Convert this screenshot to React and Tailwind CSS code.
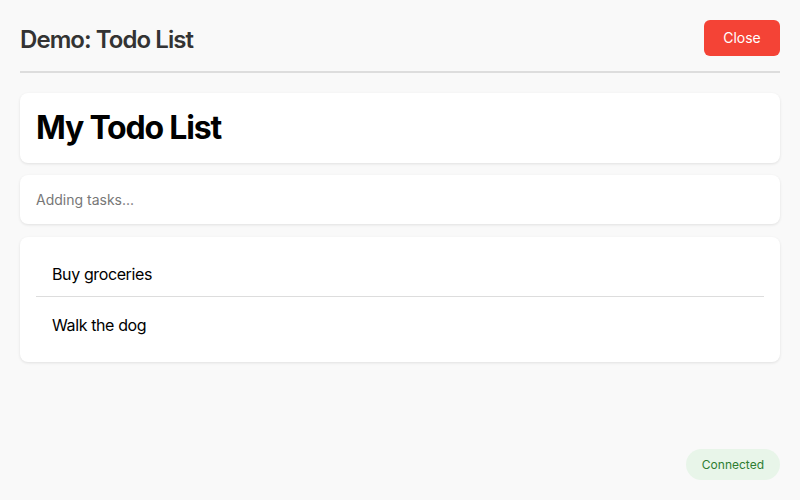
export default function App() {
  return (
    <div
      className="min-h-screen bg-[#f9f9f9] p-5 text-black"
      style={{ fontFamily: "Inter, 'Noto Sans', sans-serif" }}
    >
      <header className="flex items-center justify-between border-b-2 border-[#dddddd] pb-[15px]">
        <h1 className="h-9 pt-1 text-2xl leading-8 font-semibold tracking-[-0.039em] text-[#333333]">
          Demo: Todo List
        </h1>
        <button className="flex h-9 w-[76px] items-center justify-center rounded-md bg-[#f44336] text-sm text-white">
          Close
        </button>
      </header>

      <div className="mt-5 rounded-lg bg-white px-4 py-4 shadow-[0_1px_3px_rgba(0,0,0,0.1)]">
        <h2 className="text-[32px] leading-[38px] font-bold tracking-[-0.037em]">My Todo List</h2>
      </div>

      <div className="mt-3 rounded-lg bg-white px-4 py-4 shadow-[0_1px_3px_rgba(0,0,0,0.1)]">
        <p className="text-sm leading-[17px] text-[#777777]">Adding tasks...</p>
      </div>

      <div className="mt-[13px] rounded-lg bg-white px-4 pt-4 pb-[15px] shadow-[0_1px_3px_rgba(0,0,0,0.1)]">
        <ul>
          <li className="border-b border-[#dddddd] px-4 py-3 text-base leading-[19px] tracking-[-0.024em]">
            Buy groceries
          </li>
          <li className="mt-[7px] px-4 py-3 text-base leading-[19px] tracking-[-0.024em]">Walk the dog</li>
        </ul>
      </div>

      <div className="fixed right-5 bottom-5 rounded-full bg-[#e8f5e9] px-4 py-2 text-xs leading-[15px] text-[#2e7d32]">
        Connected
      </div>
    </div>
  );
}
